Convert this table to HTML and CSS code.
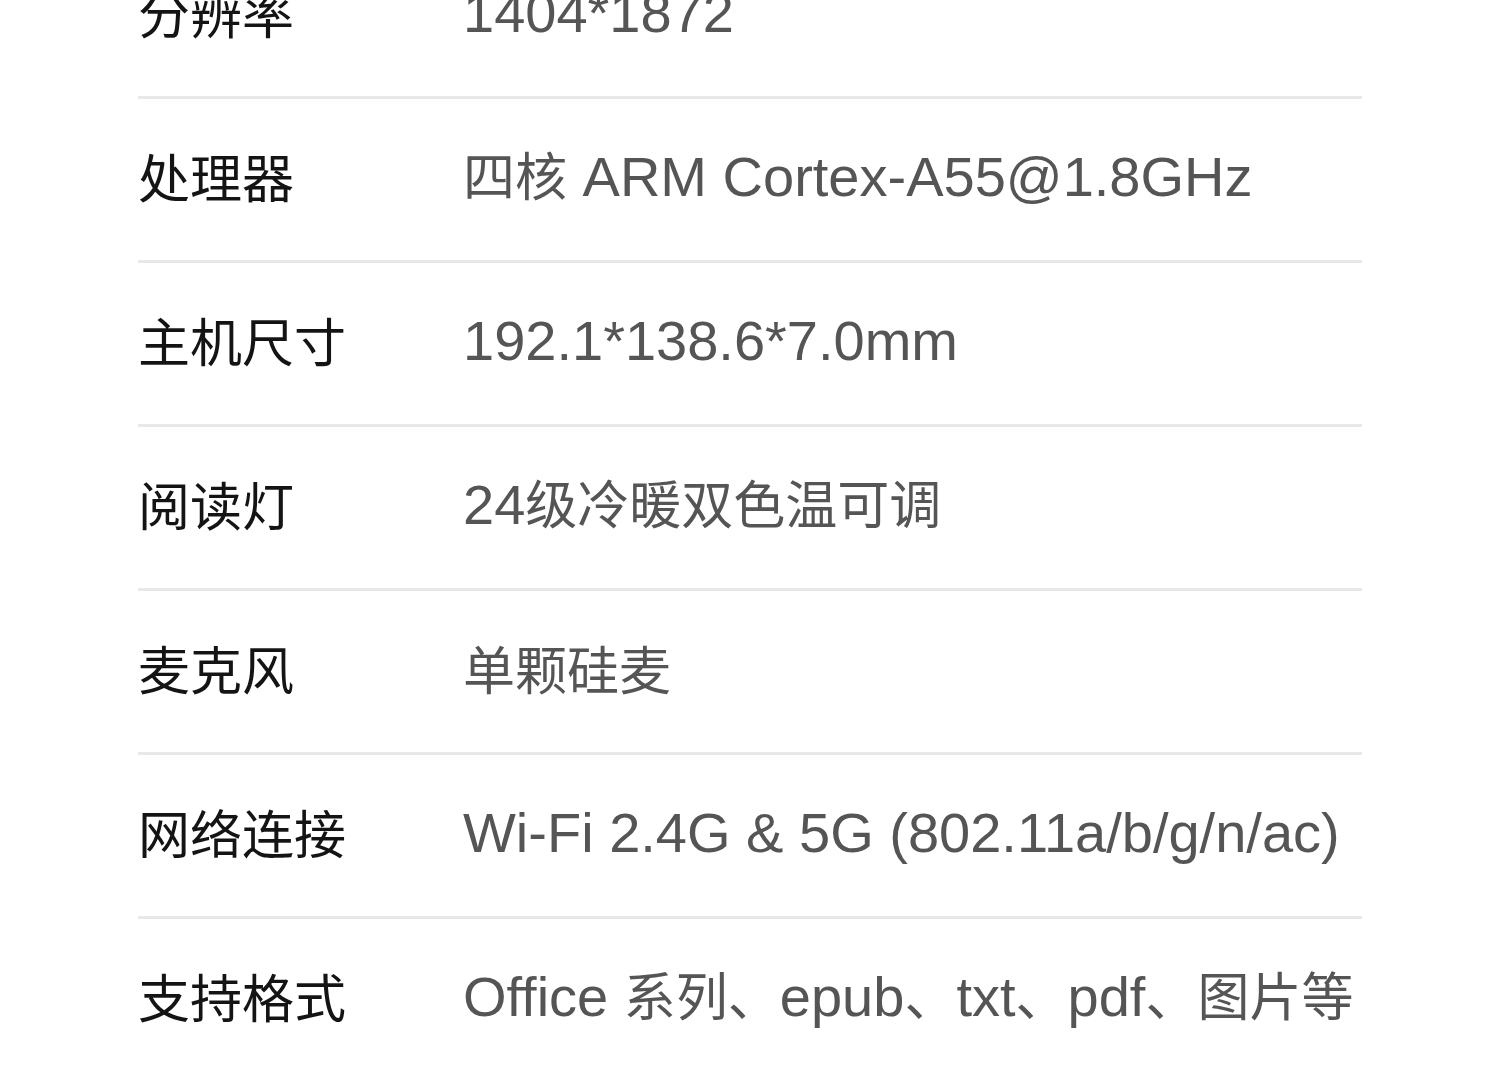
FILE: index.html
```html
<!DOCTYPE html>
<html lang="zh-CN">
<head>
<meta charset="utf-8">
<title>规格参数</title>
<link rel="stylesheet" href="styles.css">
</head>
<body>
<div class="page">
  <div class="specs">
    <div class="row"><div class="label">分辨率</div><div class="value"><span class="lat">1404*1872</span></div></div>
    <div class="row"><div class="label">处理器</div><div class="value">四核<span class="lat"> ARM Cortex-A55@1.8GHz</span></div></div>
    <div class="row"><div class="label">主机尺寸</div><div class="value"><span class="lat">192.1*138.6*7.0mm</span></div></div>
    <div class="row"><div class="label">阅读灯</div><div class="value"><span class="lat">24</span>级冷暖双色温可调</div></div>
    <div class="row"><div class="label">麦克风</div><div class="value">单颗硅麦</div></div>
    <div class="row"><div class="label">网络连接</div><div class="value"><span class="lat">Wi-Fi 2.4G &amp; 5G (802.11a/b/g/n/ac)</span></div></div>
    <div class="row"><div class="label">支持格式</div><div class="value"><span class="lat">Office </span>系列、<span class="lat">epub</span>、<span class="lat">txt</span>、<span class="lat">pdf</span>、图片等</div></div>
  </div>
</div>
</body>
</html>
```
FILE: styles.css
```css
html, body {
  margin: 0;
  padding: 0;
  background: #ffffff;
}
.page {
  width: 1500px;
  height: 1067px;
  overflow: hidden;
  box-sizing: border-box;
  padding-left: 138px;
}
.specs {
  width: 1224px;
  margin-top: -65px;
  display: flex;
  flex-direction: column;
}
.row {
  box-sizing: border-box;
  height: 164px;
  padding-bottom: 8px;
  border-bottom: 3px solid #e8e8e8;
  display: flex;
  align-items: center;
}
.label {
  width: 325px;
  flex: none;
  font-family: "Noto Sans CJK SC", sans-serif;
  font-weight: 400;
  font-size: 52px;
  line-height: 60px;
  color: #141414;
}
.value {
  font-family: "Noto Sans CJK SC", sans-serif;
  font-size: 52px;
  line-height: 60px;
  color: #555555;
  white-space: nowrap;
}
.lat {
  font-family: "Liberation Sans", Arial, sans-serif;
  font-size: 56px;
  color: #555555;
}
```
